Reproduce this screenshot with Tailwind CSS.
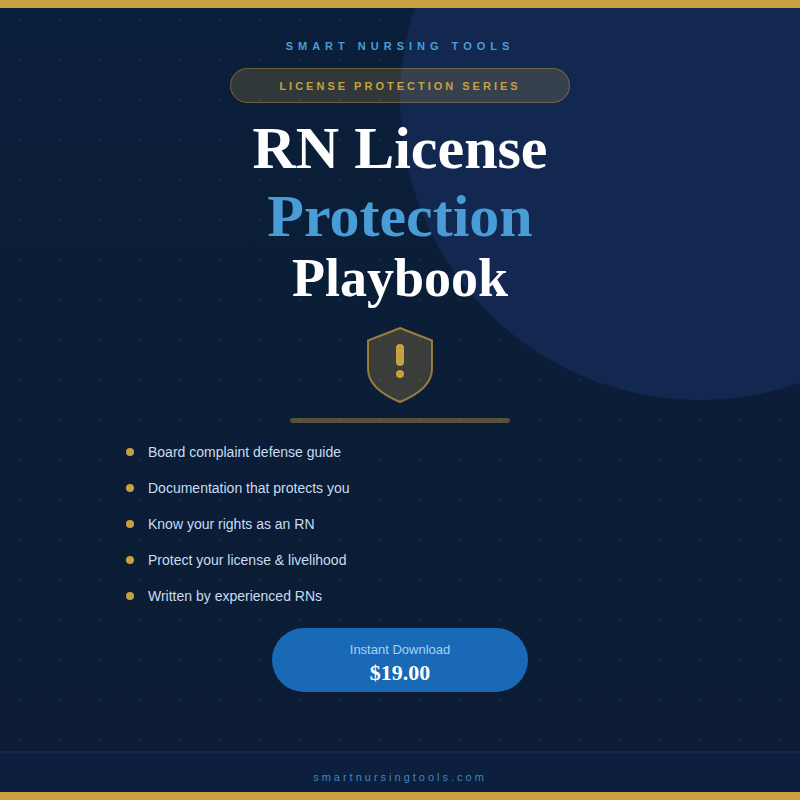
<!DOCTYPE html>
<html lang="en">

<head>
    <meta charset="UTF-8">
    <title>RN License Protection Playbook</title>
    <script src="https://cdn.jsdelivr.net/npm/@tailwindcss/browser@4"></script>
</head>

<body class="m-0">
    <div class="relative w-[800px] h-[800px] overflow-hidden flex flex-col font-['Liberation_Sans',sans-serif] bg-linear-to-b from-[#0a1f3a] to-[#0c1c34]">
        <!-- dot pattern + circle -->
        <div class="absolute inset-0 bg-[radial-gradient(circle,rgba(100,170,230,0.13)_1px,transparent_1px)] bg-size-[40px_40px]"></div>
        <div class="absolute -top-[200px] -right-[200px] w-[600px] h-[600px] rounded-full bg-[#132850]"></div>

        <div class="relative h-2 shrink-0 bg-[#c9a040]"></div>

        <main class="relative flex-1 flex flex-col items-center pt-[32px]">
            <p class="text-[11px] leading-[13px] font-bold tracking-[5px] text-[#4a9cd6]">SMART NURSING TOOLS</p>

            <div class="mt-[15px] w-[340px] h-[35px] pt-px flex items-center justify-center rounded-full border border-[#c9a040]/40 bg-[#c9a040]/20">
                <span class="text-[11px] font-bold tracking-[3px] text-[#c9a040]">LICENSE PROTECTION SERIES</span>
            </div>

            <h1 class="mt-[11px] font-['Liberation_Serif',serif] font-bold text-center text-white">
                <span class="block text-[60px] leading-[68px]">RN License</span>
                <span class="block text-[60px] leading-[68px] text-[#4a9cd6]">Protection</span>
                <span class="block text-[54px] leading-[56px]">Playbook</span>
            </h1>

            <svg class="mt-[21px] block" width="66" height="76" viewBox="0 0 66 76" fill="none">
                <path d="M33 1 L65 13.5 V42 C65 57 50 68 33 75 C16 68 1 57 1 42 V13.5 Z" fill="#c9a040" fill-opacity="0.25" stroke="#c9a040" stroke-opacity="0.7" stroke-width="2" />
                <rect x="29" y="17" width="8" height="22" rx="4" fill="#c9a040" />
                <circle cx="33" cy="47" r="4" fill="#c9a040" />
            </svg>

            <div class="mt-[15px] w-[220px] h-[5px] rounded-full bg-[#c9a040]/40"></div>

            <ul class="mt-[17px] w-full pl-[126px] flex flex-col gap-[12px]">
                <li class="flex items-center gap-[14px] h-[24px] text-[14px] text-[#c8dcf2]"><span class="w-2 h-2 rounded-full bg-[#c9a040]"></span>Board complaint defense guide</li>
                <li class="flex items-center gap-[14px] h-[24px] text-[14px] text-[#c8dcf2]"><span class="w-2 h-2 rounded-full bg-[#c9a040]"></span>Documentation that protects you</li>
                <li class="flex items-center gap-[14px] h-[24px] text-[14px] text-[#c8dcf2]"><span class="w-2 h-2 rounded-full bg-[#c9a040]"></span>Know your rights as an RN</li>
                <li class="flex items-center gap-[14px] h-[24px] text-[14px] text-[#c8dcf2]"><span class="w-2 h-2 rounded-full bg-[#c9a040]"></span>Protect your license &amp; livelihood</li>
                <li class="flex items-center gap-[14px] h-[24px] text-[14px] text-[#c8dcf2]"><span class="w-2 h-2 rounded-full bg-[#c9a040]"></span>Written by experienced RNs</li>
            </ul>

            <div class="mt-[20px] w-[256px] h-[64px] rounded-full bg-[#1969b6] flex flex-col items-center pt-[13px]">
                <span class="text-[13px] leading-[18px] text-[#a8d0f5]">Instant Download</span>
                <span class="font-['Liberation_Serif',serif] font-bold text-[22px] leading-[28px] text-white">$19.00</span>
            </div>
        </main>

        <footer class="relative h-[41px] shrink-0 border-t-2 border-[#132850] bg-[#0d1f3f] flex justify-center pt-[14px]">
            <span class="text-[11px] leading-[20px] tracking-[3px] text-[#4a9cd6]/85">smartnursingtools.com</span>
        </footer>
        <div class="relative h-2 shrink-0 bg-[#c9a040]"></div>
    </div>
</body>

</html>
